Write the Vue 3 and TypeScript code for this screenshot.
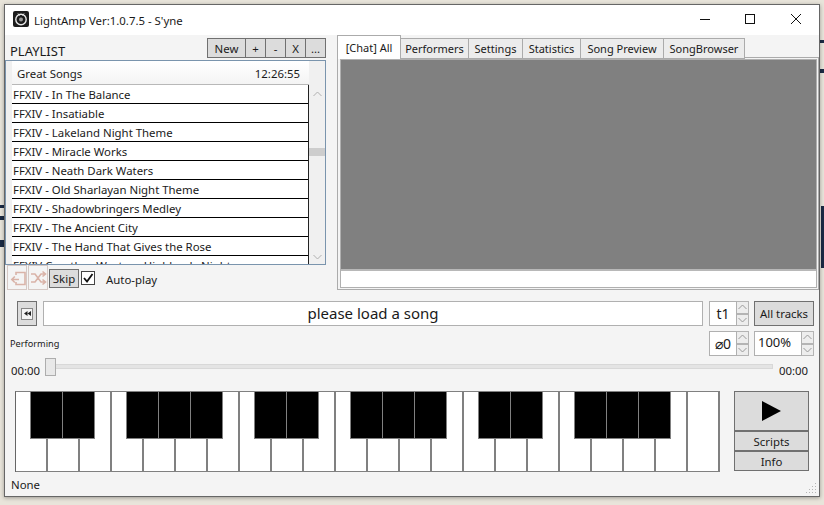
<script setup lang="ts">
const tabs = ['Performers', 'Settings', 'Statistics', 'Song Preview', 'SongBrowser']
const songs = [
  'FFXIV - In The Balance',
  'FFXIV - Insatiable',
  'FFXIV - Lakeland Night Theme',
  'FFXIV - Miracle Works',
  'FFXIV - Neath Dark Waters',
  'FFXIV - Old Sharlayan Night Theme',
  'FFXIV - Shadowbringers Medley',
  'FFXIV - The Ancient City',
  'FFXIV - The Hand That Gives the Rose',
  'FFXIV Coerthas Western Highlands Night'
]
const whiteKeys = Array.from({ length: 22 }, (_, i) => i)
// grid column of each black key, the piano grid is in half keys
const blackKeys = [2, 4, 8, 10, 12, 16, 18, 22, 24, 26, 30, 32, 36, 38, 40]
</script>

<template>
  <div class="desktop">
    <div class="window">
      <header class="titlebar">
        <svg class="logo" width="16" height="16" viewBox="0 0 16 16">
          <rect width="16" height="16" rx="2" fill="#1c1c1c" />
          <circle cx="8" cy="8.500" r="5.200" fill="none" stroke="#e8e8e8" stroke-width="1.400" />
          <circle cx="8" cy="8.500" r="2" fill="#999" />
          <path d="M5 2.500l1.500 2M11 2.500l-1.500 2" stroke="#e8e8e8" stroke-width="1" />
        </svg>
        <span class="title">LightAmp Ver:1.0.7.5 - S'yne</span>
        <div class="caption">
          <svg width="46" height="16" viewBox="0 0 46 16"><path d="M19 8.500h10" stroke="#111" /></svg>
          <svg width="46" height="16" viewBox="0 0 46 16"><rect x="18.500" y="3.500" width="9" height="9" fill="none" stroke="#111" /></svg>
          <svg width="46" height="16" viewBox="0 0 46 16"><path d="M18 3l10 10M28 3L18 13" stroke="#111" /></svg>
        </div>
      </header>

      <div class="upper">
        <section class="left">
          <div class="playlist-head">
            <span class="playlist-label">PLAYLIST</span>
            <div class="playlist-btns">
              <button class="btn new">New</button>
              <button class="btn sq">+</button>
              <button class="btn sq">-</button>
              <button class="btn sq">X</button>
              <button class="btn sq">...</button>
            </div>
          </div>
          <div class="listbox">
            <div class="list-title"><span>Great Songs</span><span>12:26:55</span></div>
            <div class="list-body">
              <div class="songs">
                <div v-for="s in songs" :key="s" class="song">{{ s }}</div>
              </div>
              <div class="scroll">
                <svg width="9" height="6" viewBox="0 0 9 6"><path d="M.5 5l4-4 4 4" fill="none" stroke="#b0b0b0" /></svg>
                <div class="thumb"></div>
                <svg width="9" height="6" viewBox="0 0 9 6"><path d="M.5 1l4 4 4-4" fill="none" stroke="#b0b0b0" /></svg>
              </div>
            </div>
          </div>
          <div class="controls">
            <button class="icon-btn">
              <svg width="17" height="16" viewBox="0 0 17 16"><path d="M7 5V2.500h9v12H7V12M3 9.500h7M5.800 6.500l-3 3 3 3" fill="none" stroke="#d9b3a8" stroke-width="1.600" /></svg>
            </button>
            <button class="icon-btn">
              <svg width="17" height="16" viewBox="0 0 17 16"><path d="M1 4h4l6 8h4M1 12h4l6-8h4M12.500 1.500L15.500 4l-3 2.500M12.500 9.500l3 2.500-3 2.500" fill="none" stroke="#d9b3a8" stroke-width="1.600" /></svg>
            </button>
            <button class="btn skip">Skip</button>
            <span class="check">
              <svg width="12" height="12" viewBox="0 0 12 12"><path d="M2 6l3 3.500L10.500 2" fill="none" stroke="#111" stroke-width="1.800" /></svg>
            </span>
            <span class="autoplay">Auto-play</span>
          </div>
        </section>

        <section class="right">
          <div class="tabs">
            <div class="tab active">[Chat] All</div>
            <div v-for="t in tabs" :key="t" class="tab">{{ t }}</div>
          </div>
          <div class="tab-panel">
            <div class="chat-box">
              <div class="chat"></div>
              <div class="chat-input"></div>
            </div>
          </div>
        </section>
      </div>

      <div class="song-row">
        <button class="rewind">
          <span class="rewind-inner">
            <svg width="7" height="5" viewBox="0 0 7 5"><path d="M3.500 0v5L0 2.500zM7 0v5L3.500 2.500z" fill="#222" /></svg>
          </span>
        </button>
        <div class="song-name">please load a song</div>
        <div class="spin narrow"><span>t1</span></div>
        <div class="arrows">
          <span><svg width="9" height="6" viewBox="0 0 9 6"><path d="M.5 5l4-4 4 4" fill="none" stroke="#999" /></svg></span>
          <span><svg width="9" height="6" viewBox="0 0 9 6"><path d="M.5 1l4 4 4-4" fill="none" stroke="#999" /></svg></span>
        </div>
        <button class="btn tracks">All tracks</button>
      </div>

      <div class="perform-row">
        <span class="performing">Performing</span>
        <div class="spin narrow"><span>⌀0</span></div>
        <div class="arrows">
          <span><svg width="9" height="6" viewBox="0 0 9 6"><path d="M.5 5l4-4 4 4" fill="none" stroke="#999" /></svg></span>
          <span><svg width="9" height="6" viewBox="0 0 9 6"><path d="M.5 1l4 4 4-4" fill="none" stroke="#999" /></svg></span>
        </div>
        <div class="spin wide"><span>100%</span></div>
        <div class="arrows">
          <span><svg width="9" height="6" viewBox="0 0 9 6"><path d="M.5 5l4-4 4 4" fill="none" stroke="#999" /></svg></span>
          <span><svg width="9" height="6" viewBox="0 0 9 6"><path d="M.5 1l4 4 4-4" fill="none" stroke="#999" /></svg></span>
        </div>
      </div>

      <div class="seek-row">
        <span class="time-a">00:00</span>
        <div class="track"><div class="knob"></div></div>
        <span class="time-b">00:00</span>
      </div>

      <div class="keys-row">
        <div class="piano">
          <div v-for="k in whiteKeys" :key="k" class="white" :style="{ gridColumn: `${k * 2 + 1} / span 2` }"></div>
          <div v-for="b in blackKeys" :key="b" class="black" :style="{ gridColumn: `${b} / span 2` }"></div>
        </div>
        <div class="play-col">
          <button class="play">
            <svg width="19" height="20" viewBox="0 0 19 20"><path d="M0 0l19 10L0 20z" fill="#000" /></svg>
          </button>
          <button class="side">Scripts</button>
          <button class="side">Info</button>
        </div>
      </div>

      <footer class="status">
        <span>None</span>
        <svg class="grip" width="12" height="12" viewBox="0 0 12 12">
          <g fill="#b5b5b5">
            <rect x="9" y="0" width="1" height="1" />
            <rect x="9" y="3" width="1" height="1" /><rect x="6" y="3" width="1" height="1" />
            <rect x="9" y="6" width="1" height="1" /><rect x="6" y="6" width="1" height="1" /><rect x="3" y="6" width="1" height="1" />
            <rect x="9" y="9" width="1" height="1" /><rect x="6" y="9" width="1" height="1" /><rect x="3" y="9" width="1" height="1" /><rect x="0" y="9" width="1" height="1" />
          </g>
        </svg>
      </footer>
    </div>
  </div>
</template>

<style>
html, body { margin: 0; background: #e8e4da; }
</style>

<style scoped>
.desktop {
  width: 824px;
  height: 505px;
  overflow: hidden;
  padding: 4px 0 0 4px;
  box-sizing: border-box;
  font-family: "Noto Sans", "Open Sans", sans-serif;
  font-size: 11.400px;
  color: #1a1a1a;
  /* dark bits of the wallpaper that show beside the window */
  background-color: #e8e4da;
  background-image:
    linear-gradient(#1a2a44, #1a2a44), linear-gradient(#1a2a44, #1a2a44), linear-gradient(#1a2a44, #1a2a44),
    linear-gradient(#1a2a44, #1a2a44), linear-gradient(#1a2a44, #1a2a44), linear-gradient(#1a2a44, #1a2a44);
  background-repeat: no-repeat;
  background-size: 4px 3px, 4px 4px, 4px 7px, 4px 3px, 4px 4px, 3px 62px;
  background-position: 0 205px, 0 216px, 0 240px, 820px 40px, 820px 69px, 821px 206px;
}
.window {
  width: 816px;
  height: 493px;
  box-sizing: border-box;
  border: 1px solid #666;
  background: #f4f4f4;
  box-shadow: 0 1px 4px #0005;
  display: flex;
  flex-direction: column;
}
button { font: inherit; color: inherit; padding: 0; }

.titlebar {
  height: 30px;
  background: #fff;
  display: flex;
  align-items: center;
  padding: 0 0 2px 8px;
  box-sizing: border-box;
  flex-shrink: 0;
}
.logo { margin-right: 5px; }
.title { margin-top: 2px; }
.caption { margin-left: auto; display: flex; }
.caption svg { display: block; }

.upper { display: flex; height: 258px; flex-shrink: 0; }
.left { width: 327px; flex-shrink: 0; }
.playlist-head { height: 24px; display: flex; align-items: center; justify-content: space-between; padding: 2px 0 0 5px; box-sizing: border-box; }
.playlist-label { font-size: 13px; margin-top: 5px; }
.playlist-btns { display: flex; margin-right: 6px; }
.btn {
  background: #dcdcdc;
  border: 1px solid #707070;
  height: 20px;
  box-sizing: border-box;
}
.playlist-btns .btn { margin-left: -1px; }
.new { width: 39px; }
.sq { width: 21px; }

.listbox {
  width: 321px;
  height: 205px;
  box-sizing: border-box;
  border: 1px solid #7a94ad;
  margin-top: 1px;
  background: #f0f0f0;
  display: flex;
  flex-direction: column;
}
.list-title {
  height: 24px;
  margin-left: 6px;
  padding: 2px 9px 0 5px;
  width: 297px;
  box-sizing: border-box;
  display: flex;
  justify-content: space-between;
  align-items: center;
  background: linear-gradient(#fff, #f4f4f4);
  border-bottom: 1px solid #b8b8b8;
}
.list-body { display: flex; flex: 1; min-height: 0; }
.songs {
  width: 297px;
  margin-left: 6px;
  box-sizing: border-box;
  background: #fff;
  overflow: hidden;
  border-right: 1px solid #222;
}
.song {
  height: 19px;
  box-sizing: border-box;
  border-bottom: 1px solid #000;
  line-height: 20px;
  padding-left: 1px;
  white-space: nowrap;
}
.scroll {
  flex: 1;
  display: flex;
  flex-direction: column;
  align-items: center;
  justify-content: space-between;
  padding: 6px 0 4px;
  box-sizing: border-box;
  position: relative;
}
.thumb { width: 100%; height: 8px; background: #cdcdcd; position: absolute; top: 63px; }

.controls { display: flex; align-items: center; height: 25px; padding-left: 2px; }
.icon-btn {
  width: 20px;
  height: 25px;
  background: #f4f4f4;
  border: 1px solid #d5c8c4;
  margin-right: 1px;
  display: flex;
  align-items: center;
  justify-content: center;
  box-sizing: border-box;
}
.skip { width: 30px; height: 19px; margin-right: 2px; margin-top: 1px; }
.check {
  width: 14px;
  height: 14px;
  box-sizing: border-box;
  border: 1px solid #444;
  background: #fff;
  display: flex;
  align-items: center;
  justify-content: center;
  margin-top: 1px;
}
.autoplay { margin-left: 11px; margin-top: 3px; }

.right { flex: 1; padding: 0 0 0 5px; min-width: 0; }
.tabs { display: grid; grid-template-columns: 64px 68px 54px 58px 83px 81px; height: 22px; align-items: end; font-size: 11px; }
.tab {
  height: 21px;
  margin-bottom: -1px;
  line-height: 20px;
  text-align: center;
  box-sizing: border-box;
  background: #ececec;
  border: 1px solid #ababab;
  border-left-width: 0;
  position: relative;
}
.tab.active {
  height: 24px;
  line-height: 23px;
  background: #fff;
  border-left-width: 1px;
  border-bottom: 0;
  z-index: 1;
}
.tab-panel {
  height: 233px;
  box-sizing: border-box;
  border: 1px solid #ababab;
  background: #f4f4f4;
  padding: 1px 1px 1px 2px;
}
.chat-box { height: 100%; box-sizing: border-box; border: 1px solid #b0b0b0; display: flex; flex-direction: column; background: #fff; }
.chat { height: 209px; background: #808080; flex-shrink: 0; border-bottom: 2px solid #b8b8b8; box-sizing: content-box; }

.song-row { display: flex; height: 25px; align-items: center; margin-top: 8px; padding-left: 12px; flex-shrink: 0; }
.rewind { width: 20px; height: 25px; background: #dcdcdc; border: 1px solid #707070; display: flex; align-items: center; justify-content: center; box-sizing: border-box; margin-right: 6px; }
.rewind-inner { width: 12px; height: 12px; background: #f4f4f4; border: 1px solid #888; box-sizing: border-box; display: flex; align-items: center; justify-content: center; }
.song-name {
  width: 660px;
  height: 25px;
  box-sizing: border-box;
  border: 1px solid #b0b0b0;
  background: #fff;
  text-align: center;
  line-height: 23px;
  font-size: 15px;
  margin-right: 6px;
}
.spin {
  height: 25px;
  box-sizing: border-box;
  border: 1px solid #b0b0b0;
  background: #fff;
  font-size: 14px;
  line-height: 23px;
}
.narrow { width: 28px; text-align: center; }
.wide { width: 48px; padding-left: 3px; font-size: 13px; line-height: 21px; }
.arrows { width: 12px; height: 25px; display: flex; flex-direction: column; }
.arrows span { flex: 1; display: flex; align-items: center; justify-content: center; background: #ededed; border: 1px solid #b4b4b4; border-left: 0; box-sizing: border-box; }
.tracks { width: 60px; height: 25px; margin-left: 5px; }

.perform-row { display: flex; height: 25px; align-items: center; margin-top: 5px; padding: 0 5px; flex-shrink: 0; }
.performing { font-size: 9.200px; margin-right: auto; }
.perform-row .arrows { margin-right: 5px; }
.perform-row .arrows:last-child { margin-right: 0; }

.seek-row { display: flex; align-items: flex-start; height: 18px; margin-top: 1px; padding: 0 11px 0 6px; flex-shrink: 0; }
.time-a { width: 34px; margin-top: 6px; flex-shrink: 0; }
.time-b { margin-left: 6px; margin-top: 6px; }
.track { flex: 1; height: 3px; margin-top: 7px; background: #e4e4e4; border: 1px solid #d8d8d8; border-left: 0; display: flex; align-items: center; }
.knob { width: 11px; height: 18px; background: #e8e8e8; border: 1px solid #adadad; box-sizing: border-box; flex-shrink: 0; }

.keys-row { display: flex; margin-top: 16px; padding-left: 10px; flex-shrink: 0; }
.piano {
  display: grid;
  grid-template-columns: repeat(44, 16px);
  grid-template-rows: 47px 33px;
  width: 704px;
  height: 80px;
  border-left: 1px solid #666;
  border-top: 1px solid #808080;
}
.white { grid-row: 1 / 3; background: #fff; border-right: 2px solid #808080; border-bottom: 1px solid #808080; box-sizing: border-box; }
.black {
  grid-row: 1;
  margin: 0 1px 0 -1px;
  background: #000;
  border-right: 1px solid #808080;
  border-bottom: 1px solid #808080;
  box-shadow: -1px 0 0 #808080;
  box-sizing: border-box;
  z-index: 1;
}

.play-col { margin-left: 14px; width: 75px; display: flex; flex-direction: column; }
.play { height: 40px; background: #dcdcdc; border: 1px solid #707070; display: flex; align-items: center; justify-content: center; box-sizing: border-box; }
.side { height: 20px; background: #dcdcdc; border: 1px solid #707070; box-sizing: border-box; }

.status { flex: 1; display: flex; align-items: center; justify-content: space-between; padding: 0 0 0 6px; }
.grip { align-self: flex-end; margin-right: 1px; margin-bottom: 1px; }
</style>
